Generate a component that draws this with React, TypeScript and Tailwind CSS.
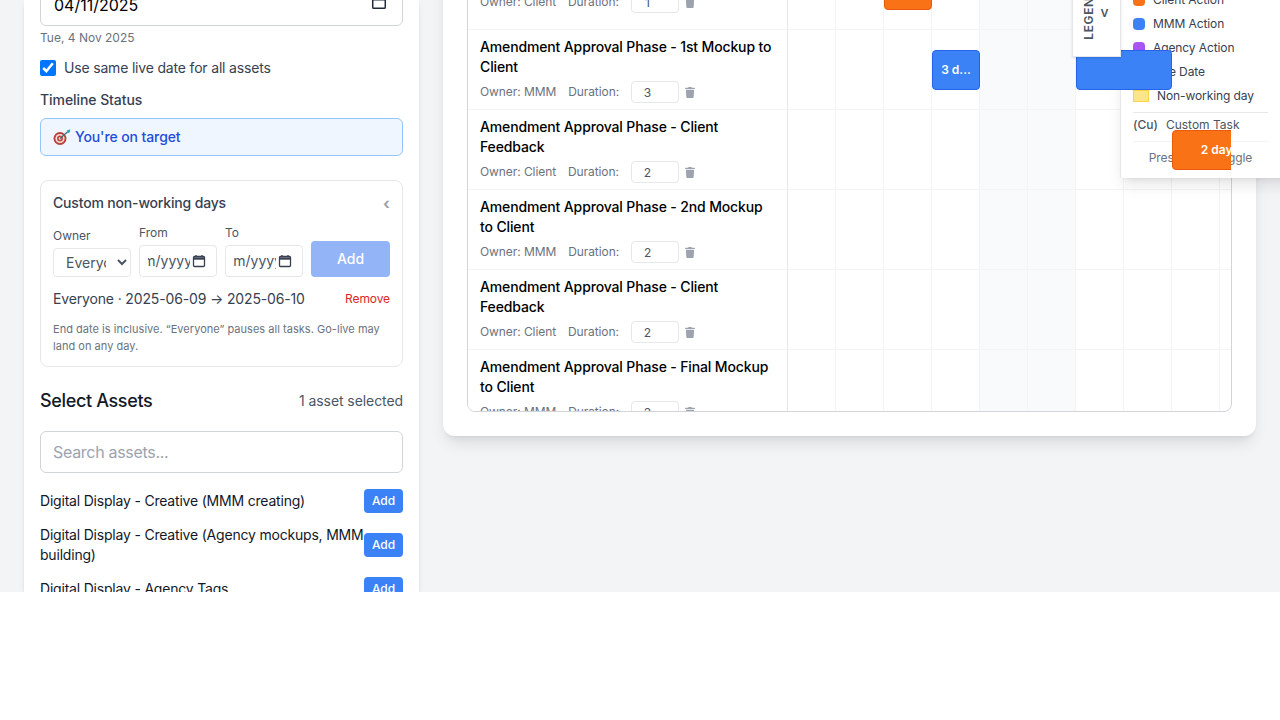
import { FaTrash } from "react-icons/fa";

type Bar = { start: number; span: number; color: "orange" | "blue"; label?: string };
type Row = { title: string; owner: string; duration: number; bars: Bar[] };

const rows: Row[] = [
  { title: "Agency Review of Brief", owner: "Client", duration: 1, bars: [{ start: 2, span: 1, color: "orange" }] },
  {
    title: "Amendment Approval Phase - 1st Mockup to Client",
    owner: "MMM",
    duration: 3,
    bars: [
      { start: 3, span: 1, color: "blue", label: "3 d..." },
      { start: 6, span: 2, color: "blue" },
    ],
  },
  { title: "Amendment Approval Phase - Client Feedback", owner: "Client", duration: 2, bars: [{ start: 8, span: 2, color: "orange", label: "2 days" }] },
  { title: "Amendment Approval Phase - 2nd Mockup to Client", owner: "MMM", duration: 2, bars: [] },
  { title: "Amendment Approval Phase - Client Feedback", owner: "Client", duration: 2, bars: [] },
  { title: "Amendment Approval Phase - Final Mockup to Client", owner: "MMM", duration: 3, bars: [] },
];

const cells = [0, 1, 2, 3, 4, 5, 6, 7, 8, 9];

function CalendarIcon({ className }: { className: string }) {
  return (
    <svg viewBox="0 0 14 14" className={className} fill="none" stroke="currentColor">
      <rect x="1.5" y="2.5" width="11" height="10" rx="1" strokeWidth="1.3" />
      <path d="M1.5 4.5h11" strokeWidth="2.4" />
      <path d="M4 1v2M10 1v2" strokeWidth="1.3" />
    </svg>
  );
}

function TargetEmoji() {
  return (
    <svg viewBox="0 0 18 16" className="w-[18px] h-4 shrink-0">
      <circle cx="7" cy="9.5" r="6.5" fill="#b9403a" />
      <circle cx="7" cy="9.5" r="4.6" fill="#f1e3dc" />
      <circle cx="7" cy="9.5" r="3" fill="#c8453d" />
      <circle cx="7" cy="9.5" r="1.3" fill="#f1e3dc" />
      <path d="M7 9.5 15 2.5" stroke="#4a6a72" strokeWidth="1.2" />
      <path d="M14 1.2l3.4-.6-.8 3-2.2.6z" fill="#38a5b5" />
    </svg>
  );
}

function DateBox({ text, offset }: { text: string; offset: string }) {
  return (
    <div className="w-[78px] h-8 border border-[#e5e7eb] rounded flex items-center pl-2 pr-[10px] gap-[2px] bg-white">
      <div className="flex-1 overflow-hidden whitespace-nowrap text-sm text-[#4b5563]">
        <span className={`inline-block ${offset}`}>{text}</span>
      </div>
      <CalendarIcon className="w-[14px] h-[14px] shrink-0 text-[#374151]" />
    </div>
  );
}

function AssetRow({ name }: { name: string }) {
  return (
    <div className="flex items-center justify-between">
      <span className="text-sm leading-5 tracking-[-0.2px] text-[#111827]">{name}</span>
      <button className="shrink-0 w-[39px] h-6 rounded bg-[#3b82f6] text-white text-xs font-medium">Add</button>
    </div>
  );
}

function TaskRow({ row, first }: { row: Row; first: boolean }) {
  return (
    <div className="flex h-20 border-b border-[#f3f4f6]">
      <div className="w-80 shrink-0 border-r border-[#e5e7eb] px-3 pt-[7px] bg-white">
        <div className="text-sm leading-5 font-medium tracking-[-0.14px] text-black">{row.title}</div>
        <div className={first ? "flex items-center mt-[14px] text-xs tracking-[-0.08px] text-[#6b7280]" : "flex items-center mt-1 text-xs tracking-[-0.08px] text-[#6b7280]"}>
          <span>Owner: {row.owner}</span>
          <span className="ml-3">Duration:</span>
          <input
            type="number"
            readOnly
            value={row.duration}
            className="ml-3 w-12 h-[22px] border border-[#e5e7eb] rounded text-center text-xs text-[#4b5563] px-0 bg-white"
          />
          <FaTrash className="ml-[6px] w-[10px] h-[11px] text-[#9ca3af]" />
        </div>
      </div>
      <div className="relative flex">
        {cells.map((c) => (
          <div
            key={c}
            className={c === 4 || c === 5 ? "w-12 shrink-0 border-r border-[#f3f4f6] bg-[#f9fafb]" : "w-12 shrink-0 border-r border-[#f3f4f6]"}
          />
        ))}
        {row.bars.map((bar) => (
          <div
            key={bar.start}
            className={
              bar.color === "orange"
                ? "absolute z-20 top-5 h-10 rounded border border-[#ea580c] bg-[#f97316] text-white text-xs font-semibold flex items-center justify-center"
                : "absolute z-20 top-5 h-10 rounded border border-[#2563eb] bg-[#3b82f6] text-white text-xs font-semibold flex items-center justify-center"
            }
            style={{ left: bar.start * 48, width: bar.span * 48 }}
          >
            {bar.label}
          </div>
        ))}
      </div>
    </div>
  );
}

function LegendItem({ color, label }: { color: string; label: string }) {
  return (
    <div className="flex items-center gap-2 h-6">
      <span className={`w-3 h-3 rounded-[4px] ${color}`} />
      <span className="text-xs tracking-[-0.1px] text-[#374151]">{label}</span>
    </div>
  );
}

export default function App() {
  return (
    <div className="relative h-[592px] overflow-hidden bg-[#f3f4f6] flex gap-6 px-6 font-['Inter',sans-serif]">
      {/* left settings panel, page is scrolled so top is cut */}
      <div className="w-[395px] shrink-0 bg-white shadow-md px-4">
        <div className="-mt-4 h-[42px] border border-[#d1d5db] rounded-md flex items-center justify-between pl-[13px] pr-[15px]">
          <span className="text-base text-black">04/11/2025</span>
          <CalendarIcon className="w-4 h-4 mb-[6px] text-[#1f2937]" />
        </div>
        <div className="mt-1 text-xs leading-4 text-[#6b7280]">Tue, 4 Nov 2025</div>
        <label className="mt-3 flex items-center gap-2 text-sm leading-5 tracking-[-0.18px] text-[#374151]">
          <input type="checkbox" defaultChecked className="w-4 h-4" />
          Use same live date for all assets
        </label>
        <div className="mt-3 text-sm leading-5 font-medium tracking-[-0.07px] text-[#374151]">Timeline Status</div>
        <div className="mt-2 h-[38px] border border-[#93c5fd] bg-[#eff6ff] rounded-md flex items-center gap-1 pl-3 text-sm font-medium tracking-[-0.1px] text-[#1d4ed8]">
          <TargetEmoji />
          You're on target
        </div>

        <div className="mt-6 border border-[#e5e7eb] rounded-lg p-3">
          <div className="flex items-center justify-between">
            <span className="text-sm leading-5 font-medium tracking-[-0.17px] text-[#374151]">Custom non-working days</span>
            <span className="text-base leading-5 font-bold text-[#9ca3af]">‹</span>
          </div>
          <div className="mt-3 flex items-end gap-2">
            <div>
              <div className="text-xs leading-4 text-[#4b5563] mb-1">Owner</div>
              <select className="w-[78px] h-[29px] border border-[#e5e7eb] rounded text-sm text-[#4b5563] pl-2 pr-2 bg-white">
                <option>Everyone</option>
              </select>
            </div>
            <div>
              <div className="text-xs leading-4 text-[#4b5563] mb-1">From</div>
              <DateBox text="mm/yyyy" offset="-ml-[17px]" />
            </div>
            <div>
              <div className="text-xs leading-4 text-[#4b5563] mb-1">To</div>
              <DateBox text="mm/yyyy" offset="-ml-[13px]" />
            </div>
            <button className="w-[79px] h-9 rounded bg-[#93b4f7] text-white text-sm font-medium">Add</button>
          </div>
          <div className="mt-3 flex items-center justify-between leading-5">
            <span className="text-sm tracking-[-0.15px] text-[#374151]">Everyone · 2025-06-09 → 2025-06-10</span>
            <span className="text-xs tracking-[-0.1px] text-[#dc2626]">Remove</span>
          </div>
          <p className="mt-3 text-[11px] leading-[16.5px] tracking-[0.03px] text-[#6b7280]">
            End date is inclusive. “Everyone” pauses all tasks. Go-live may land on any day.
          </p>
        </div>

        <div className="mt-5 flex items-center justify-between">
          <h3 className="text-lg font-medium tracking-[-0.35px] text-[#111827]">Select Assets</h3>
          <span className="text-sm tracking-[-0.08px] text-[#4b5563]">1 asset selected</span>
        </div>
        <input
          placeholder="Search assets..."
          className="mt-4 w-full h-[42px] border border-[#d1d5db] rounded-md px-3 text-base tracking-[-0.3px] placeholder:text-[#9ca3af]"
        />
        <div className="mt-4 flex flex-col gap-3">
          <AssetRow name="Digital Display - Creative (MMM creating)" />
          <AssetRow name="Digital Display - Creative (Agency mockups, MMM building)" />
          <AssetRow name="Digital Display - Agency Tags" />
        </div>
      </div>

      {/* timeline card */}
      <div className="w-[813px] shrink-0 self-start -mt-[100px] bg-white rounded-xl shadow-lg pt-[49px] px-6 pb-6">
        <div className="h-[463px] overflow-hidden border border-[#d1d5db] rounded-lg">
          {rows.map((row, i) => (
            <TaskRow key={i} row={row} first={i === 0} />
          ))}
        </div>
      </div>

      {/* legend overlay */}
      <div className="absolute z-10 left-[1120px] top-[-30px] w-[180px] h-[208px] bg-white shadow-lg border-l border-[#e5e7eb] pl-3 pt-[18px]">
        <div className="w-[135px]">
          <LegendItem color="bg-[#f97316]" label="Client Action" />
          <LegendItem color="bg-[#3b82f6]" label="MMM Action" />
          <LegendItem color="bg-[#a855f7]" label="Agency Action" />
          <LegendItem color="bg-[#ef4444]" label="Live Date" />
          <div className="flex items-center gap-2 h-6">
            <span className="w-4 h-3 bg-[#fde68a] border border-[#fcd34d]" />
            <span className="text-xs tracking-[-0.1px] text-[#374151]">Non-working day</span>
          </div>
          <div className="mt-1 border-t border-[#e5e7eb] h-[29px] pb-[5px] flex items-center gap-2 text-xs text-[#4b5563]">
            <span className="font-medium">(Cu)</span>
            <span>Custom Task</span>
          </div>
          <div className="border-t border-[#f3f4f6] h-9 pb-1 flex items-center justify-center text-xs tracking-[-0.1px] text-[#6b7280] whitespace-nowrap">
            Press "L" to toggle
          </div>
        </div>
      </div>
      <div className="absolute z-30 left-[1072px] top-[-30px] w-[49px] h-[87px] bg-white border border-t-0 border-[#e5e7eb] shadow-sm flex items-end justify-center gap-[3px] pr-[3px] pb-4">
        <span className="[writing-mode:vertical-rl] rotate-180 text-xs font-semibold tracking-wider text-[#4b5563]">LEGEND</span>
        <span className="text-sm font-medium text-[#4b5563] self-start mt-[32px]">v</span>
      </div>
    </div>
  );
}
